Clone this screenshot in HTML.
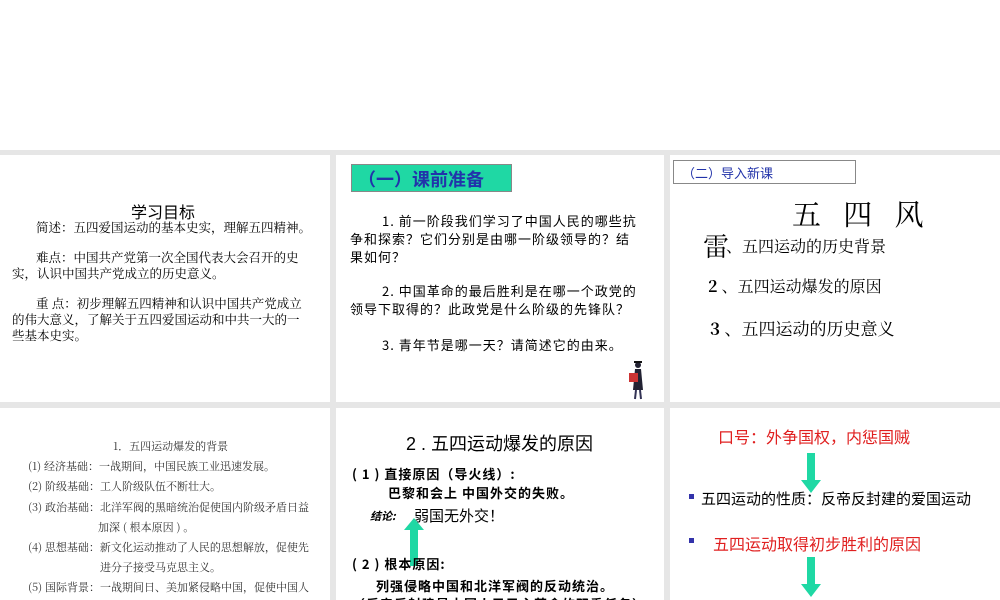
<!DOCTYPE html>
<html><head><meta charset="utf-8"><style>
body{margin:0;width:1000px;height:600px;position:relative;overflow:hidden;background:#fff;font-family:"Liberation Sans","Noto Sans CJK SC",sans-serif;}
.bg{position:absolute;left:0;top:150px;width:1000px;height:450px;background:#e6e6e6;}
.p{position:absolute;background:#fff;overflow:hidden;}
.t{position:absolute;white-space:nowrap;color:#000;}
.s{font-family:"Noto Serif CJK SC","Liberation Serif",serif;}
.k{font-family:"WenQuanYi Zen Hei","Noto Sans CJK SC",sans-serif;}
</style></head><body>
<div class="bg"></div>
<!-- row 1 -->
<div class="p" style="left:0;top:155px;width:330px;height:247px">
 <div class="t" style="left:131px;top:44px;font-size:16px">学习目标</div>
 <div class="t s" style="left:36px;top:63px;font-size:12.5px">简述：五四爱国运动的基本史实，理解五四精神。</div>
 <div class="t s" style="left:36px;top:93px;font-size:12.5px">难点：中国共产党第一次全国代表大会召开的史</div>
 <div class="t s" style="left:12px;top:109px;font-size:12.5px">实，认识中国共产党成立的历史意义。</div>
 <div class="t s" style="left:36px;top:139px;font-size:12.5px">重 点：初步理解五四精神和认识中国共产党成立</div>
 <div class="t s" style="left:12px;top:155px;font-size:12.5px">的伟大意义，了解关于五四爱国运动和中共一大的一</div>
 <div class="t s" style="left:12px;top:171px;font-size:12.5px">些基本史实。</div>
</div>
<div class="p" style="left:336px;top:155px;width:328px;height:247px">
 <div style="position:absolute;left:15px;top:9px;width:159px;height:26px;background:#1fd8a4;border:1px solid #888;"></div>
 <div class="t" style="left:22px;top:11px;font-size:18px;color:#2233aa;font-weight:bold">（一）课前准备</div>
 <div class="t k" style="left:46px;top:56px;font-size:13px;letter-spacing:1px">1. 前一阶段我们学习了中国人民的哪些抗</div>
 <div class="t k" style="left:14px;top:74px;font-size:13px;letter-spacing:1px">争和探索？它们分别是由哪一阶级领导的？结</div>
 <div class="t k" style="left:14px;top:92px;font-size:13px;letter-spacing:1px">果如何？</div>
 <div class="t k" style="left:46px;top:126px;font-size:13px;letter-spacing:1px">2. 中国革命的最后胜利是在哪一个政党的</div>
 <div class="t k" style="left:14px;top:144px;font-size:13px;letter-spacing:1px">领导下取得的？此政党是什么阶级的先锋队？</div>
 <div class="t k" style="left:46px;top:180px;font-size:13px;letter-spacing:1px">3. 青年节是哪一天？请简述它的由来。</div>
 <svg style="position:absolute;left:290px;top:205px" width="24" height="42"><circle cx="12" cy="5" r="3" fill="#223"/><rect x="8" y="1" width="8" height="2" fill="#111"/><path d="M9 9 L15 9 L17 30 L7 30 Z" fill="#223"/><rect x="3" y="13" width="9" height="9" fill="#c33"/><path d="M10 30 L9 39 M14 30 L15 39" stroke="#335" stroke-width="2"/></svg>
</div>
<div class="p" style="left:670px;top:155px;width:330px;height:247px">
 <div style="position:absolute;left:3px;top:5px;width:181px;height:22px;border:1px solid #888;"></div>
 <div class="t" style="left:12px;top:8px;font-size:13px;color:#2233aa">（二）导入新课</div>
 <div class="t s" style="left:122px;top:38px;font-size:29px">五&nbsp;&nbsp;&nbsp;四&nbsp;&nbsp;&nbsp;风</div>
 <div class="t s" style="left:33px;top:72px;font-size:26px">雷</div>
 <div class="t s" style="left:56px;top:79px;font-size:16px">、五四运动的历史背景</div>
 <div class="t s" style="left:38px;top:119px;font-size:16px"><b>2</b> 、五四运动爆发的原因</div>
 <div class="t s" style="left:40px;top:160px;font-size:17px"><b>3</b> 、五四运动的历史意义</div>
</div>
<!-- row 2 -->
<div class="p" style="left:0;top:408px;width:330px;height:192px">
 <div class="t s" style="left:113px;top:30px;font-size:11px;color:#333">1．五四运动爆发的背景</div>
 <div class="t s" style="left:28px;top:50px;font-size:11px;color:#333">(1) 经济基础：一战期间，中国民族工业迅速发展。</div>
 <div class="t s" style="left:28px;top:70px;font-size:11px;color:#333">(2) 阶级基础：工人阶级队伍不断壮大。</div>
 <div class="t s" style="left:28px;top:91px;font-size:11px;color:#333">(3) 政治基础：北洋军阀的黑暗统治促使国内阶级矛盾日益</div>
 <div class="t s" style="left:98px;top:111px;font-size:11px;color:#333">加深 ( 根本原因 ) 。</div>
 <div class="t s" style="left:28px;top:131px;font-size:11px;color:#333">(4) 思想基础：新文化运动推动了人民的思想解放，促使先</div>
 <div class="t s" style="left:100px;top:151px;font-size:11px;color:#333">进分子接受马克思主义。</div>
 <div class="t s" style="left:28px;top:171px;font-size:11px;color:#333">(5) 国际背景：一战期间日、美加紧侵略中国，促使中国人</div>
 <div class="t s" style="left:98px;top:191px;font-size:11px;color:#333">民反帝情绪日益高涨，俄国十月革命的胜利</div>
</div>
<div class="p" style="left:336px;top:408px;width:328px;height:192px">
 <div class="t" style="left:70px;top:22px;font-size:18px">2 . 五四运动爆发的原因</div>
 <div class="t k" style="left:16px;top:56px;font-size:13px;font-weight:bold;letter-spacing:1px">( 1 ) 直接原因（导火线）:</div>
 <div class="t k" style="left:52px;top:75px;font-size:13px;font-weight:bold;letter-spacing:1px">巴黎和会上 中国外交的失败。</div>
 <div class="t k" style="left:34px;top:100px;font-size:11px;font-weight:bold;font-style:italic">结论:</div>
 <div class="t" style="left:78px;top:97px;font-size:15px">弱国无外交！</div>
 <svg style="position:absolute;left:68px;top:110px" width="20" height="48"><path d="M10 0 L20 12 L14 12 L14 48 L6 48 L6 12 L0 12 Z" fill="#1fd8a4"/></svg>
 <div class="t k" style="left:16px;top:146px;font-size:13px;font-weight:bold;letter-spacing:1px">( 2 ) 根本原因:</div>
 <div class="t k" style="left:40px;top:168px;font-size:13px;font-weight:bold;letter-spacing:1px">列强侵略中国和北洋军阀的反动统治。</div>
 <div class="t k" style="left:16px;top:186px;font-size:13px;font-weight:bold;letter-spacing:1px">（反帝反封建是中国人民民主革命的双重任务）</div>
</div>
<div class="p" style="left:670px;top:408px;width:330px;height:192px">
 <div class="t" style="left:48px;top:16px;font-size:16px;color:#e02020">口号：外争国权，内惩国贼</div>
 <svg style="position:absolute;left:131px;top:45px" width="20" height="40"><path d="M6 0 L14 0 L14 27 L20 27 L10 40 L0 27 L6 27 Z" fill="#1fd8a4"/></svg>
 <div style="position:absolute;left:19px;top:86px;width:5px;height:5px;background:#3333aa"></div>
 <div class="t" style="left:31px;top:80px;font-size:15px">五四运动的性质：反帝反封建的爱国运动</div>
 <div style="position:absolute;left:19px;top:130px;width:5px;height:5px;background:#3333aa"></div>
 <div class="t" style="left:43px;top:123px;font-size:16px;color:#e02020">五四运动取得初步胜利的原因</div>
 <svg style="position:absolute;left:131px;top:149px" width="20" height="40"><path d="M6 0 L14 0 L14 27 L20 27 L10 40 L0 27 L6 27 Z" fill="#1fd8a4"/></svg>
</div>
</body></html>
